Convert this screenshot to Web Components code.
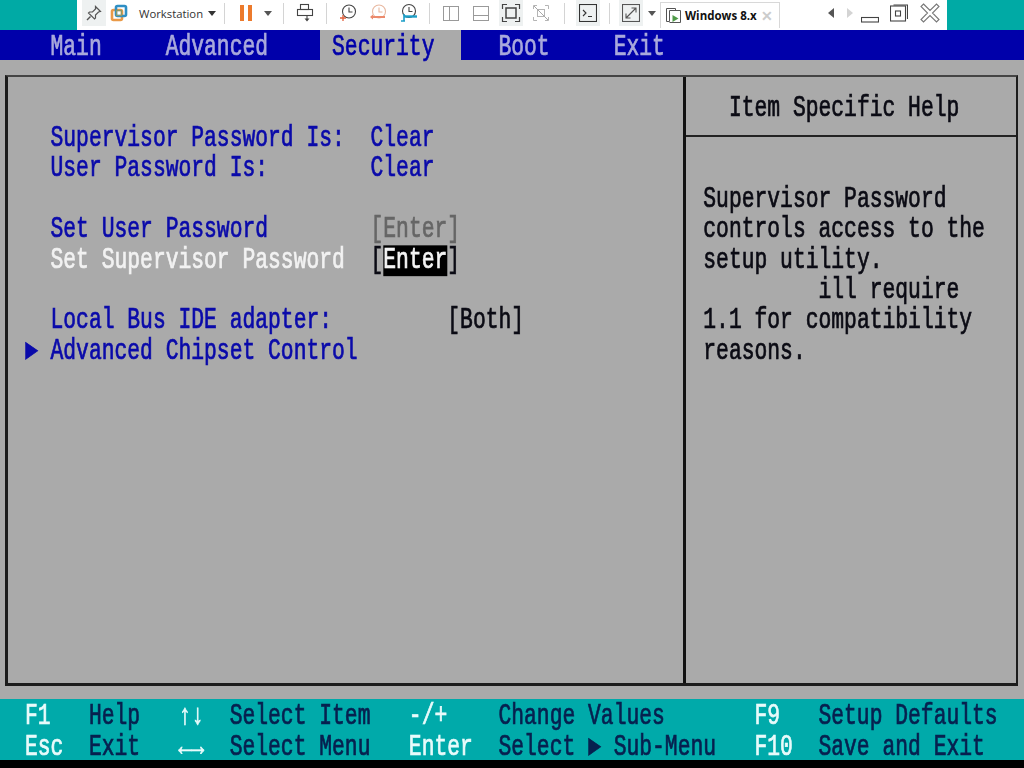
<!DOCTYPE html>
<html>
<head>
<meta charset="utf-8">
<title>BIOS Security</title>
<style>
  html, body { margin: 0; padding: 0; background: #000; width: 1024px; height: 768px; overflow: hidden; }
</style>
</head>
<body>
<bios-app>
  <vm-toolbar slot="toolbar">
    <vm-tool w="24" active><svg width="18" height="18" viewBox="0 0 18 18" fill="none" stroke="#555" stroke-width="1.2"><path d="M10.5 2.5l5 5-2 .5-3 3 0 3-1 1-6-6 1-1 3 0 3-3z"/><path d="M5.5 12.5l-3.5 3.5" stroke-width="1.4"/></svg></vm-tool>
    <vm-tool w="25"><svg width="18" height="18" viewBox="0 0 18 18" fill="none" stroke-width="2.6"><rect x="2" y="6" width="10" height="10" rx="1.5" stroke="#ea9a48"/><rect x="6" y="2" width="10" height="10" rx="1.5" stroke="#2f8fc4"/><rect x="6.5" y="6.5" width="5" height="5" stroke="#8a9a6a" stroke-width="1.3"/></svg></vm-tool>
    <vm-label w="89" caret>Workstation</vm-label>
    <vm-sep w="8"></vm-sep>
    <vm-tool w="36"><svg width="14" height="18" viewBox="0 0 14 18" fill="#ec7a2c"><rect x="1" y="1" width="4" height="16"/><rect x="9" y="1" width="4" height="16"/></svg></vm-tool>
    <vm-tool w="8"><svg width="8" height="5" viewBox="0 0 8 5" fill="#555"><path d="M0 0h8L4 5z"/></svg></vm-tool>
    <vm-sep w="22"></vm-sep>
    <vm-tool w="22"><svg width="18" height="20" viewBox="0 0 18 20" fill="none" stroke="#444" stroke-width="1.1"><rect x="4.5" y="1.5" width="8" height="5"/><rect x="1.5" y="6.5" width="15" height="6"/><path d="M11 12.5v4" /><path d="M8.5 15.5h5L11 18.5z" fill="#444" stroke="none"/></svg></vm-tool>
    <vm-sep w="20"></vm-sep>
    <vm-tool w="24"><svg width="18" height="20" viewBox="0 0 18 20" fill="none" stroke="#444" stroke-width="1.1"><circle cx="10" cy="8.5" r="6.5"/><path d="M10 4.5v4.5h3.5"/><path d="M4 12v6M1 15h6" stroke="#e2603c" stroke-width="1.3"/></svg></vm-tool>
    <vm-tool w="36"><svg width="18" height="20" viewBox="0 0 18 20" fill="none" stroke="#e8b8a0" stroke-width="1.1"><circle cx="10" cy="8.5" r="6.5"/><path d="M10 4.5v4.5h3.5"/><path d="M2 14h14" stroke="#ec8a6c" stroke-width="2"/><path d="M1 14l3-2.5v5z" fill="#ec8a6c" stroke="none"/></svg></vm-tool>
    <vm-tool w="26"><svg width="18" height="20" viewBox="0 0 18 20" fill="none" stroke="#444" stroke-width="1.1"><circle cx="9" cy="8" r="6.5"/><path d="M9 4v4.5h3.5"/><path d="M4 13.5h13" stroke="#1e9fc8" stroke-width="2.4"/><path d="M4 11v7M1 18h4" stroke="#1e9fc8" stroke-width="1.6"/></svg></vm-tool>
    <vm-sep w="14"></vm-sep>
    <vm-tool w="30"><svg width="18" height="18" viewBox="0 0 18 18" fill="none" stroke="#9a9a9a"><rect x="1.5" y="2.5" width="15" height="14"/><path d="M7.5 2.5v14"/></svg></vm-tool>
    <vm-tool w="30"><svg width="18" height="18" viewBox="0 0 18 18" fill="none" stroke="#9a9a9a"><rect x="1.5" y="2.5" width="15" height="14"/><path d="M1.5 11.5h15"/></svg></vm-tool>
    <vm-tool w="30" active inset="3"><svg width="20" height="20" viewBox="0 0 20 20" fill="none" stroke="#444" stroke-width="1.2"><rect x="5" y="5" width="10" height="10" stroke-width="1.5"/><path d="M1.5 6V1.5H6M14 1.5h4.5V6M18.5 14v4.5H14M6 18.5H1.5V14"/></svg></vm-tool>
    <vm-tool w="30"><svg width="18" height="18" viewBox="0 0 18 18" fill="none" stroke="#b5b5b5"><path d="M1.5 5V1.5H5M13 1.5h3.5V5M16.5 13v3.5H13M5 16.5H1.5V13"/><rect x="5.5" y="5.5" width="7" height="7"/><path d="M2 2l14 14" stroke="#a8a8a8"/></svg></vm-tool>
    <vm-sep w="16"></vm-sep>
    <vm-tool w="32" active inset="4"><svg width="18" height="18" viewBox="0 0 18 18" fill="none" stroke="#333" stroke-width="1.1"><rect x=".5" y=".5" width="17" height="17"/><path d="M4 6l3 3-3 3M9 12.5h4"/></svg></vm-tool>
    <vm-sep w="10"></vm-sep>
    <vm-tool w="34" active inset="5"><svg width="18" height="18" viewBox="0 0 18 18" fill="none" stroke="#555" stroke-width="1.1"><rect x=".5" y=".5" width="17" height="17"/><path d="M4 14L14 4M9.5 4H14v4.5M4 9.5V14h4.5"/></svg></vm-tool>
    <vm-tool w="8"><svg width="8" height="5" viewBox="0 0 8 5" fill="#555"><path d="M0 0h8L4 5z"/></svg></vm-tool>
    <vm-tab>Windows 8.x</vm-tab>
    <vm-spacer></vm-spacer>
    <vm-tool w="16"><svg width="8" height="10" viewBox="0 0 8 10" fill="#555"><path d="M6 0v10L0 5z"/></svg></vm-tool>
    <vm-tool w="20"><svg width="6" height="10" viewBox="0 0 6 10" fill="#d4d4d4"><path d="M0 0v10l6-5z"/></svg></vm-tool>
    <vm-tool w="20"><svg width="18" height="20" viewBox="0 0 18 20" fill="none" stroke="#444" stroke-width="1.1"><rect x=".5" y="14.5" width="17" height="4.5"/></svg></vm-tool>
    <vm-tool w="38"><svg width="18" height="18" viewBox="0 0 18 18" fill="none" stroke="#444" stroke-width="1.1"><path d="M3.5 1h14v14"/><rect x=".5" y="2" width="15" height="15"/><rect x="5.5" y="7" width="5" height="5"/></svg></vm-tool>
    <vm-tool w="24"><svg width="20" height="20" viewBox="0 0 20 20" fill="none" stroke="#777" stroke-width="1.1"><path d="M3.5 1L10 7.5 16.5 1 19 3.5 12.5 10 19 16.5 16.5 19 10 12.5 3.5 19 1 16.5 7.5 10 1 3.5z"/></svg></vm-tool>
  </vm-toolbar>

  <bios-menu slot="menu">
    <bios-tab>Main</bios-tab>
    <bios-tab>Advanced</bios-tab>
    <bios-tab selected>Security</bios-tab>
    <bios-tab>Boot</bios-tab>
    <bios-tab>Exit</bios-tab>
  </bios-menu>

  <bios-frame slot="frame">
    <bios-row slot="items" label="Supervisor Password Is:" value="Clear" tone="info"></bios-row>
    <bios-row slot="items" label="User Password Is:" value="Clear" tone="info"></bios-row>
    <bios-row slot="items"></bios-row>
    <bios-row slot="items" label="Set User Password" value="[Enter]" tone="off"></bios-row>
    <bios-row slot="items" label="Set Supervisor Password" value="[Enter]" tone="current"></bios-row>
    <bios-row slot="items"></bios-row>
    <bios-row slot="items" label="Local Bus IDE adapter:" value="[Both]" indent="6"></bios-row>
    <bios-row slot="items" label="Advanced Chipset Control" marker></bios-row>

    <bios-text slot="title">Item Specific Help</bios-text>
    <bios-line slot="help">Supervisor Password</bios-line>
    <bios-line slot="help">controls access to the</bios-line>
    <bios-line slot="help">setup utility.</bios-line>
    <bios-line slot="help">         ill require</bios-line>
    <bios-line slot="help">1.1 for compatibility</bios-line>
    <bios-line slot="help">reasons.</bios-line>
  </bios-frame>

  <bios-footer slot="footer">
    <bios-hint keys="F1" what="Help" keys2="↑↓" what2="Select Item" keys3="-/+" what3="Change Values" keys4="F9" what4="Setup Defaults"></bios-hint>
    <bios-hint keys="Esc" what="Exit" keys2="←→" what2="Select Menu" keys3="Enter" what3="Select ► Sub-Menu" keys4="F10" what4="Save and Exit"></bios-hint>
  </bios-footer>
</bios-app>

<script>
// text cell of the emulated 80x25 screen: Liberation Mono is stretched to the tall VGA shape
const CELL = 12.8, ROW = 30.4, STRETCH = 1.34;

class BiosText extends HTMLElement {
  constructor() {
    super();
    this.attachShadow({ mode: 'open' });
    // no whitespace around the slot: the host is white-space: pre
    this.shadowRoot.innerHTML = `<style>
        :host {
          display: inline-block;
          font-family: "Liberation Mono", monospace;
          font-size: 21.33px;
          line-height: ${ROW / STRETCH}px;
          white-space: pre;
          transform: translate(-.7px, 2.2px) scaleY(${STRETCH});
          -webkit-text-stroke: .55px currentColor;
          filter: blur(.35px);
        }
      </style><slot></slot>`;
  }
}
customElements.define('bios-text', BiosText);

class BiosLine extends HTMLElement {
  constructor() {
    super();
    this.attachShadow({ mode: 'open' });
    this.shadowRoot.innerHTML = `
      <style>
        :host { display: flex; align-items: center; height: ${ROW}px; color: #0b0b14; }
      </style>
      <bios-text><slot></slot></bios-text>`;
  }
}
customElements.define('bios-line', BiosLine);

class BiosApp extends HTMLElement {
  constructor() {
    super();
    this.attachShadow({ mode: 'open' });
    this.shadowRoot.innerHTML = `
      <style>
        :host { display: flex; flex-direction: column; width: 1024px; height: 768px; background: #aaa; overflow: hidden; }
        .bottom { flex: 1; background: #000; }
      </style>
      <slot name="toolbar"></slot>
      <slot name="menu"></slot>
      <slot name="frame"></slot>
      <slot name="footer"></slot>
      <div class="bottom"></div>`;
  }
}
customElements.define('bios-app', BiosApp);

// host toolbar
class VmToolbar extends HTMLElement {
  constructor() {
    super();
    this.attachShadow({ mode: 'open' });
    this.shadowRoot.innerHTML = `
      <style>
        :host { display: block; height: 30px; background: #00aaa5; padding: 0 77px; box-sizing: border-box; }
        .bar { display: flex; align-items: flex-start; height: 100%; background: #fff; padding: 0 5px; box-sizing: border-box; width: 870px; }
      </style>
      <div class="bar"><slot></slot></div>`;
  }
}
customElements.define('vm-toolbar', VmToolbar);

class VmTool extends HTMLElement {
  constructor() {
    super();
    this.attachShadow({ mode: 'open' });
    this.shadowRoot.innerHTML = `
      <style>
        :host { display: flex; flex: none; align-items: center; justify-content: center; height: 26px; width: var(--w); box-sizing: border-box; }
        :host([active]) { background: #eef1f1 content-box; padding: 0 var(--inset, 0px); }
        svg { display: block; }
      </style>
      <slot></slot>`;
    this.style.setProperty('--w', this.getAttribute('w') + 'px');
    if (this.hasAttribute('inset')) this.style.setProperty('--inset', this.getAttribute('inset') + 'px');
  }
}
customElements.define('vm-tool', VmTool);

class VmLabel extends HTMLElement {
  constructor() {
    super();
    this.attachShadow({ mode: 'open' });
    this.shadowRoot.innerHTML = `
      <style>
        :host { display: flex; flex: none; align-items: center; gap: 5px; width: var(--w); height: 26px; padding-left: 8px; box-sizing: border-box; font: 11.3px "Open Sans", "Liberation Sans", sans-serif; color: #333; }
        i { width: 0; height: 0; border: 4px solid transparent; border-top: 5px solid #333; border-bottom: 0; }
      </style>
      <slot></slot><i></i>`;
    this.style.setProperty('--w', this.getAttribute('w') + 'px');
  }
}
customElements.define('vm-label', VmLabel);

class VmSep extends HTMLElement {
  constructor() {
    super();
    this.attachShadow({ mode: 'open' });
    this.shadowRoot.innerHTML = `
      <style>
        :host { display: flex; flex: none; justify-content: center; width: var(--w); margin-top: 3px; }
        div { width: 1px; height: 21px; background: #d4d4d4; }
      </style>
      <div></div>`;
    this.style.setProperty('--w', this.getAttribute('w') + 'px');
  }
}
customElements.define('vm-sep', VmSep);

class VmSpacer extends HTMLElement {
  constructor() {
    super();
    this.attachShadow({ mode: 'open' });
    this.shadowRoot.innerHTML = `<style>:host { display: block; flex: none; width: 44px; }</style>`;
  }
}
customElements.define('vm-spacer', VmSpacer);

class VmTab extends HTMLElement {
  constructor() {
    super();
    this.attachShadow({ mode: 'open' });
    this.shadowRoot.innerHTML = `
      <style>
        :host { display: flex; flex: none; align-items: center; width: 120px; height: 26px; margin: 2px 0 0 4px; box-sizing: border-box; border: 1px solid #d8d8d8; border-bottom: 0; padding-left: 5px; font: bold 11.5px "Open Sans", "Liberation Sans", sans-serif; color: #111; }
        svg { flex: none; margin-right: 3px; }
        .close { margin-left: 4px; color: #ccc; font: bold 14px "Liberation Sans", sans-serif; }
      </style>
      <svg width="16" height="18" viewBox="0 0 16 18" fill="none" stroke="#555"><path d="M3.5 14.5h-3v-13h9v2"/><path d="M3.5 14.5v-11h11v12h-11"/><path d="M6.5 8v7l6-3.5z" fill="#4f9a48" stroke="none"/></svg>
      <slot></slot><span class="close">✕</span>`;
  }
}
customElements.define('vm-tab', VmTab);

// bios menu bar
class BiosMenu extends HTMLElement {
  constructor() {
    super();
    this.attachShadow({ mode: 'open' });
    this.shadowRoot.innerHTML = `
      <style>
        :host { display: flex; height: ${ROW}px; background: #0000aa; padding-left: ${CELL * 3}px; }
      </style>
      <slot></slot>`;
  }
}
customElements.define('bios-menu', BiosMenu);

class BiosTab extends HTMLElement {
  constructor() {
    super();
    this.attachShadow({ mode: 'open' });
    const widths = { Main: 9, Advanced: 13, Security: 13, Boot: 9, Exit: 6 };
    this.shadowRoot.innerHTML = `
      <style>
        :host { position: relative; display: flex; align-items: center; box-sizing: border-box; padding-left: ${CELL}px; width: ${CELL * widths[this.textContent.trim()]}px; color: #a9a9dc; }
        :host([selected]) { color: #0000aa; }
        .bg { display: none; }
        :host([selected]) .bg { display: block; position: absolute; left: 0; top: 0; width: ${CELL * 11}px; height: 100%; background: #aaa; }
        bios-text { position: relative; }
      </style>
      <div class="bg"></div>
      <bios-text><slot></slot></bios-text>`;
  }
}
customElements.define('bios-tab', BiosTab);

// main frame with the two panels
class BiosFrame extends HTMLElement {
  constructor() {
    super();
    this.attachShadow({ mode: 'open' });
    this.shadowRoot.innerHTML = `
      <style>
        :host { display: grid; grid-template-columns: 675px 1fr; height: 611px; margin: 14.6px 6px 13.5px 5px; box-sizing: border-box; border: 3px solid #1c1c1c; border-top-width: 2px; border-top-color: #444; border-right-width: 2px; color: #0b0b14; }
        .items { padding: 44.2px 0 0 17.6px; }
        .help { border-left: 3px solid #111; display: flex; flex-direction: column; min-width: 0; }
        .title { height: 58.5px; border-bottom: 2px solid #222; display: flex; align-items: center; padding-left: ${729.6 - 686}px; }
        .body { padding: 44.5px 0 0 ${704 - 686}px; }
      </style>
      <div class="items"><slot name="items"></slot></div>
      <div class="help">
        <div class="title"><slot name="title"></slot></div>
        <div class="body"><slot name="help"></slot></div>
      </div>`;
  }
}
customElements.define('bios-frame', BiosFrame);

class BiosRow extends HTMLElement {
  constructor() {
    super();
    this.attachShadow({ mode: 'open' });
    const label = this.getAttribute('label') || '';
    const value = this.getAttribute('value');
    const tone = this.getAttribute('tone') || '';
    let val = '';
    if (value && tone === 'current') {
      val = `<span class="val"><bios-text>[</bios-text><bios-text class="hl">${value.slice(1, -1)}</bios-text><bios-text>]</bios-text></span>`;
    } else if (value) {
      val = `<span class="val"><bios-text>${value}</bios-text></span>`;
    }
    this.shadowRoot.innerHTML = `
      <style>
        :host { display: grid; grid-template-columns: ${CELL * 2}px ${CELL * 25}px 1fr; align-items: center; height: ${ROW}px; color: #0a0aaa; }
        :host([tone="current"]) .lab { color: #f2f2f2; }
        .val { display: flex; align-items: center; color: #0b0b14; padding-left: ${CELL * (+this.getAttribute('indent') || 0)}px; }
        :host([tone="info"]) .val { color: #0a0aaa; }
        :host([tone="off"]) .val { color: #666; }
        .hl { background: #000; color: #f4f4f4; }
      </style>
      <span>${this.hasAttribute('marker') ? '<bios-text>►</bios-text>' : ''}</span>
      <span class="lab">${label ? `<bios-text>${label}</bios-text>` : ''}</span>
      ${val}`;
  }
}
customElements.define('bios-row', BiosRow);

// key legend at the bottom
class BiosFooter extends HTMLElement {
  constructor() {
    super();
    this.attachShadow({ mode: 'open' });
    this.shadowRoot.innerHTML = `
      <style>:host { display: block; background: #00aaaa; flex: none; }</style>
      <slot></slot>`;
  }
}
customElements.define('bios-footer', BiosFooter);

class BiosHint extends HTMLElement {
  constructor() {
    super();
    this.attachShadow({ mode: 'open' });
    const a = n => this.getAttribute(n);
    const cols = [5, 7, 4, 14, 7, 20, 5, 14].map(c => c * CELL + 'px').join(' ');
    this.shadowRoot.innerHTML = `
      <style>
        :host { display: grid; grid-template-columns: ${cols}; align-items: center; height: ${ROW}px; padding-left: ${CELL * 2}px; color: #07204f; }
        .k { color: #e8fbfb; }
        .arrows { font-weight: bold; }
      </style>
      <bios-text class="k">${a('keys')}</bios-text><bios-text>${a('what')}</bios-text>
      <bios-text class="k arrows">${a('keys2')}</bios-text><bios-text>${a('what2')}</bios-text>
      <bios-text class="k">${a('keys3')}</bios-text><bios-text>${a('what3')}</bios-text>
      <bios-text class="k">${a('keys4')}</bios-text><bios-text>${a('what4')}</bios-text>`;
  }
}
customElements.define('bios-hint', BiosHint);
</script>
</body>
</html>
